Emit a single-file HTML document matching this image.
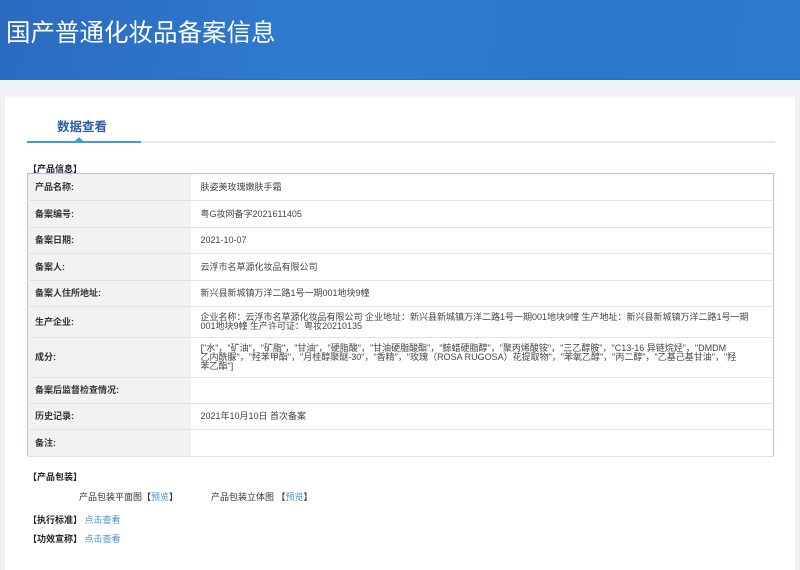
<!DOCTYPE html>
<html><head><meta charset="utf-8"><style>
*{margin:0;padding:0;box-sizing:border-box}
body{width:800px;height:570px;overflow:hidden;background:#eef2f5;font-family:"Liberation Sans","Noto Sans CJK SC",sans-serif;font-size:9px;color:#333}
.hd{position:absolute;left:0;top:0;width:800px;height:80px;background:linear-gradient(100deg,#2a6bc0 0%,#2f7bd0 40%,#2a78cc 70%,#2b7ad0 100%);border-bottom:1px solid #2a70c0}
.hd h1{position:absolute;left:6px;top:14px;font-size:24.5px;font-weight:normal;color:#fff;font-family:"Noto Sans CJK SC",sans-serif;letter-spacing:0}
.card{position:absolute;left:5px;top:97px;width:790px;height:473px;background:#fff}
.tab{position:absolute;left:57px;top:116px;font-size:12.5px;font-weight:bold;color:#2a5da8}
.line{position:absolute;left:27px;top:141px;width:748px;height:2px;background:#e8e8e8}
.line i{position:absolute;left:0;top:0;width:114px;height:2px;background:#3f9be0}
.tri{position:absolute;left:75px;top:137px;width:0;height:0;border-left:4px solid transparent;border-right:4px solid transparent;border-bottom:4px solid #3f9be0}
.sec{position:absolute;left:28px;font-weight:bold;font-size:9px;color:#222}
table{position:absolute;left:27px;top:173px;width:747px;border-collapse:collapse;border:1px solid #aac4e2}
td{border-bottom:1px solid #dde3ea;padding:0 7px;line-height:9px;vertical-align:middle}
td.l{width:163px;background:#f2f2f2;font-weight:bold;color:#333}
td.v{padding-left:10px;padding-right:12px;color:#444}
a{color:#4a90d9;text-decoration:none}
</style></head><body>
<div class="hd"><h1>国产普通化妆品备案信息</h1></div>
<div class="card"></div>
<div class="tab">数据查看</div>
<div class="line"><i></i></div>
<div class="tri"></div>
<div class="sec" style="top:162px">【产品信息】</div>
<table>
<tr style="height:27px"><td class="l">产品名称:</td><td class="v">肤姿美玫瑰嫩肤手霜</td></tr>
<tr style="height:27px"><td class="l">备案编号:</td><td class="v">粤G妆网备字2021611405</td></tr>
<tr style="height:26px"><td class="l">备案日期:</td><td class="v">2021-10-07</td></tr>
<tr style="height:27px"><td class="l">备案人:</td><td class="v">云浮市名草源化妆品有限公司</td></tr>
<tr style="height:26px"><td class="l">备案人住所地址:</td><td class="v">新兴县新城镇万洋二路1号一期001地块9幢</td></tr>
<tr style="height:31px"><td class="l">生产企业:</td><td class="v">企业名称：云浮市名草源化妆品有限公司 企业地址：新兴县新城镇万洋二路1号一期001地块9幢 生产地址：新兴县新城镇万洋二路1号一期<br>001地块9幢 生产许可证：粤妆20210135</td></tr>
<tr style="height:40px"><td class="l">成分:</td><td class="v">["水"，"矿油"，"矿脂"，"甘油"，"硬脂酸"，"甘油硬脂酸酯"，"鲸蜡硬脂醇"，"聚丙烯酸铵"，"三乙醇胺"，"C13-16 异链烷烃"，"DMDM<br>乙内酰脲"，"羟苯甲酯"，"月桂醇聚醚-30"，"香精"，"玫瑰（ROSA RUGOSA）花提取物"，"苯氧乙醇"，"丙二醇"，"乙基己基甘油"，"羟<br>苯乙酯"]</td></tr>
<tr style="height:26px"><td class="l">备案后监督检查情况:</td><td class="v"></td></tr>
<tr style="height:26px"><td class="l">历史记录:</td><td class="v">2021年10月10日 首次备案</td></tr>
<tr style="height:27px"><td class="l">备注:</td><td class="v"></td></tr>
</table>
<div class="sec" style="top:470px">【产品包装】</div>
<div style="position:absolute;left:79px;top:490px">产品包装平面图【<a>预览</a>】</div>
<div style="position:absolute;left:211px;top:490px">产品包装立体图 【<a>预览</a>】</div>
<div class="sec" style="top:513px">【执行标准】 <a style="font-weight:normal">点击查看</a></div>
<div class="sec" style="top:532px">【功效宣称】 <a style="font-weight:normal">点击查看</a></div>
</body></html>
